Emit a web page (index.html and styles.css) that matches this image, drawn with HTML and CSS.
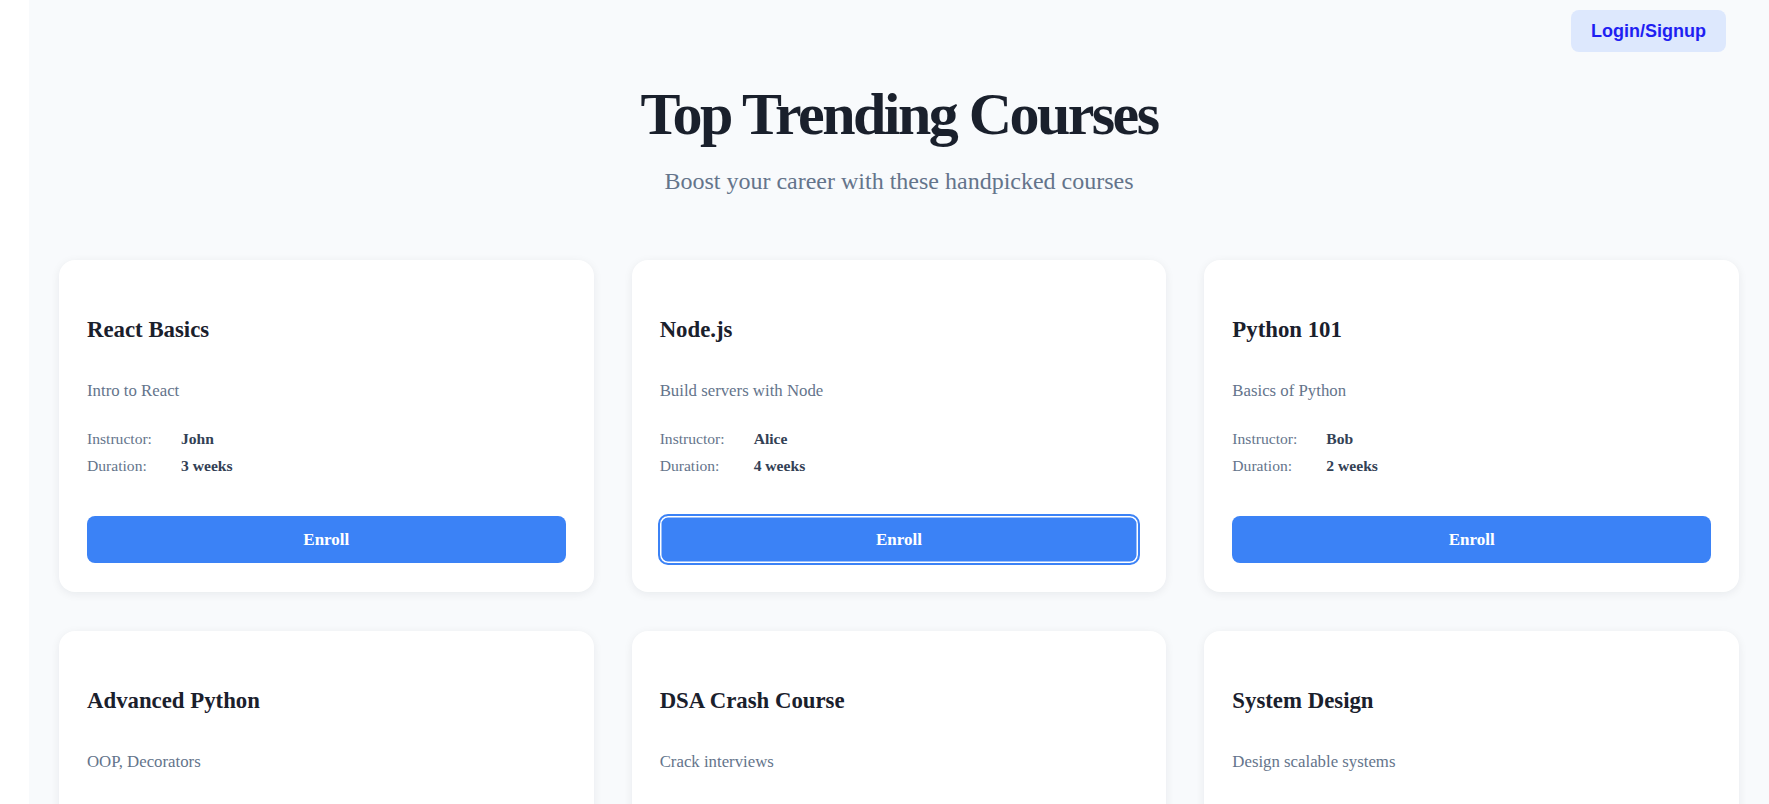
FILE: index.html
```html
<!DOCTYPE html>
<html lang="en">
<head>
<meta charset="utf-8">
<title>Top Trending Courses</title>
<link rel="stylesheet" href="styles.css">
</head>
<body>
<div class="shell">
  <main class="page">
    <header class="topbar">
      <button class="login" type="button">Login/Signup</button>
    </header>

    <section class="hero">
      <h1 class="hero-title">Top Trending Courses</h1>
      <p class="hero-sub">Boost your career with these handpicked courses</p>
    </section>

    <section class="grid">
      <article class="card">
        <h2 class="card-title">React Basics</h2>
        <p class="card-desc">Intro to React</p>
        <dl class="info">
          <dt>Instructor:</dt><dd>John</dd>
          <dt>Duration:</dt><dd>3 weeks</dd>
        </dl>
        <button class="enroll" type="button">Enroll</button>
      </article>

      <article class="card">
        <h2 class="card-title">Node.js</h2>
        <p class="card-desc">Build servers with Node</p>
        <dl class="info">
          <dt>Instructor:</dt><dd>Alice</dd>
          <dt>Duration:</dt><dd>4 weeks</dd>
        </dl>
        <button class="enroll is-focused" type="button">Enroll</button>
      </article>

      <article class="card">
        <h2 class="card-title">Python 101</h2>
        <p class="card-desc">Basics of Python</p>
        <dl class="info">
          <dt>Instructor:</dt><dd>Bob</dd>
          <dt>Duration:</dt><dd>2 weeks</dd>
        </dl>
        <button class="enroll" type="button">Enroll</button>
      </article>

      <article class="card">
        <h2 class="card-title">Advanced Python</h2>
        <p class="card-desc">OOP, Decorators</p>
        <dl class="info">
          <dt>Instructor:</dt><dd>Eve</dd>
          <dt>Duration:</dt><dd>5 weeks</dd>
        </dl>
        <button class="enroll" type="button">Enroll</button>
      </article>

      <article class="card">
        <h2 class="card-title">DSA Crash Course</h2>
        <p class="card-desc">Crack interviews</p>
        <dl class="info">
          <dt>Instructor:</dt><dd>Raj</dd>
          <dt>Duration:</dt><dd>6 weeks</dd>
        </dl>
        <button class="enroll" type="button">Enroll</button>
      </article>

      <article class="card">
        <h2 class="card-title">System Design</h2>
        <p class="card-desc">Design scalable systems</p>
        <dl class="info">
          <dt>Instructor:</dt><dd>Aditi</dd>
          <dt>Duration:</dt><dd>8 weeks</dd>
        </dl>
        <button class="enroll" type="button">Enroll</button>
      </article>
    </section>
  </main>
</div>
</body>
</html>
```

FILE: styles.css
```css
html, body {
  margin: 0;
  padding: 0;
  background: #ffffff;
  font-family: "Liberation Serif", "Times New Roman", serif;
}

.shell {
  display: flex;
  padding-left: 29px;
}

.page {
  flex: 1;
  min-height: 100vh;
  background: #f8fafc;
  padding: 10px 30px 40px;
}

.topbar {
  display: flex;
  justify-content: flex-end;
  padding-right: 13px;
}

.login {
  font-family: "Liberation Sans", Arial, sans-serif;
  font-weight: 700;
  font-size: 18px;
  line-height: 20px;
  padding: 11px 20px;
  color: #1f1ff2;
  background: #dde8fd;
  border: none;
  border-radius: 8px;
}

.hero {
  margin-top: 28px;
  text-align: center;
}

.hero-title {
  margin: 0;
  font-size: 60px;
  line-height: 69px;
  font-weight: 700;
  letter-spacing: -2.55px;
  color: #1a202c;
}

.hero-sub {
  margin: 18px 0 0;
  font-size: 24px;
  line-height: 28px;
  color: #64748b;
}

.grid {
  margin-top: 65px;
  display: grid;
  grid-template-columns: repeat(3, 1fr);
  column-gap: 38px;
  row-gap: 39px;
}

.card {
  background: #ffffff;
  border-radius: 16px;
  box-shadow: 0 2px 10px rgba(15, 23, 42, 0.07);
  padding: 28px 28px 29px;
}

.card-title {
  margin: 29px 0 0;
  font-size: 22.8px;
  line-height: 26px;
  font-weight: 700;
  color: #1a202c;
}

.card-desc {
  margin: 38px 0 0;
  font-size: 16.8px;
  line-height: 19px;
  color: #64748b;
}

.info {
  margin: 30px 0 0;
  display: grid;
  grid-template-columns: 94px 1fr;
  row-gap: 9px;
  font-size: 15.6px;
  line-height: 18px;
}

.info dt {
  color: #64748b;
}

.info dd {
  margin: 0;
  font-weight: 700;
  color: #334155;
}

.enroll {
  display: block;
  width: 100%;
  margin-top: 41px;
  height: 47px;
  border: none;
  border-radius: 8px;
  background: #3b82f6;
  color: #ffffff;
  font-family: "Liberation Serif", "Times New Roman", serif;
  font-weight: 700;
  font-size: 17px;
}

.enroll.is-focused {
  outline: 2px solid #3b82f6;
  outline-offset: 0;
  box-shadow: inset 0 0 0 1.5px #ffffff;
}
```
